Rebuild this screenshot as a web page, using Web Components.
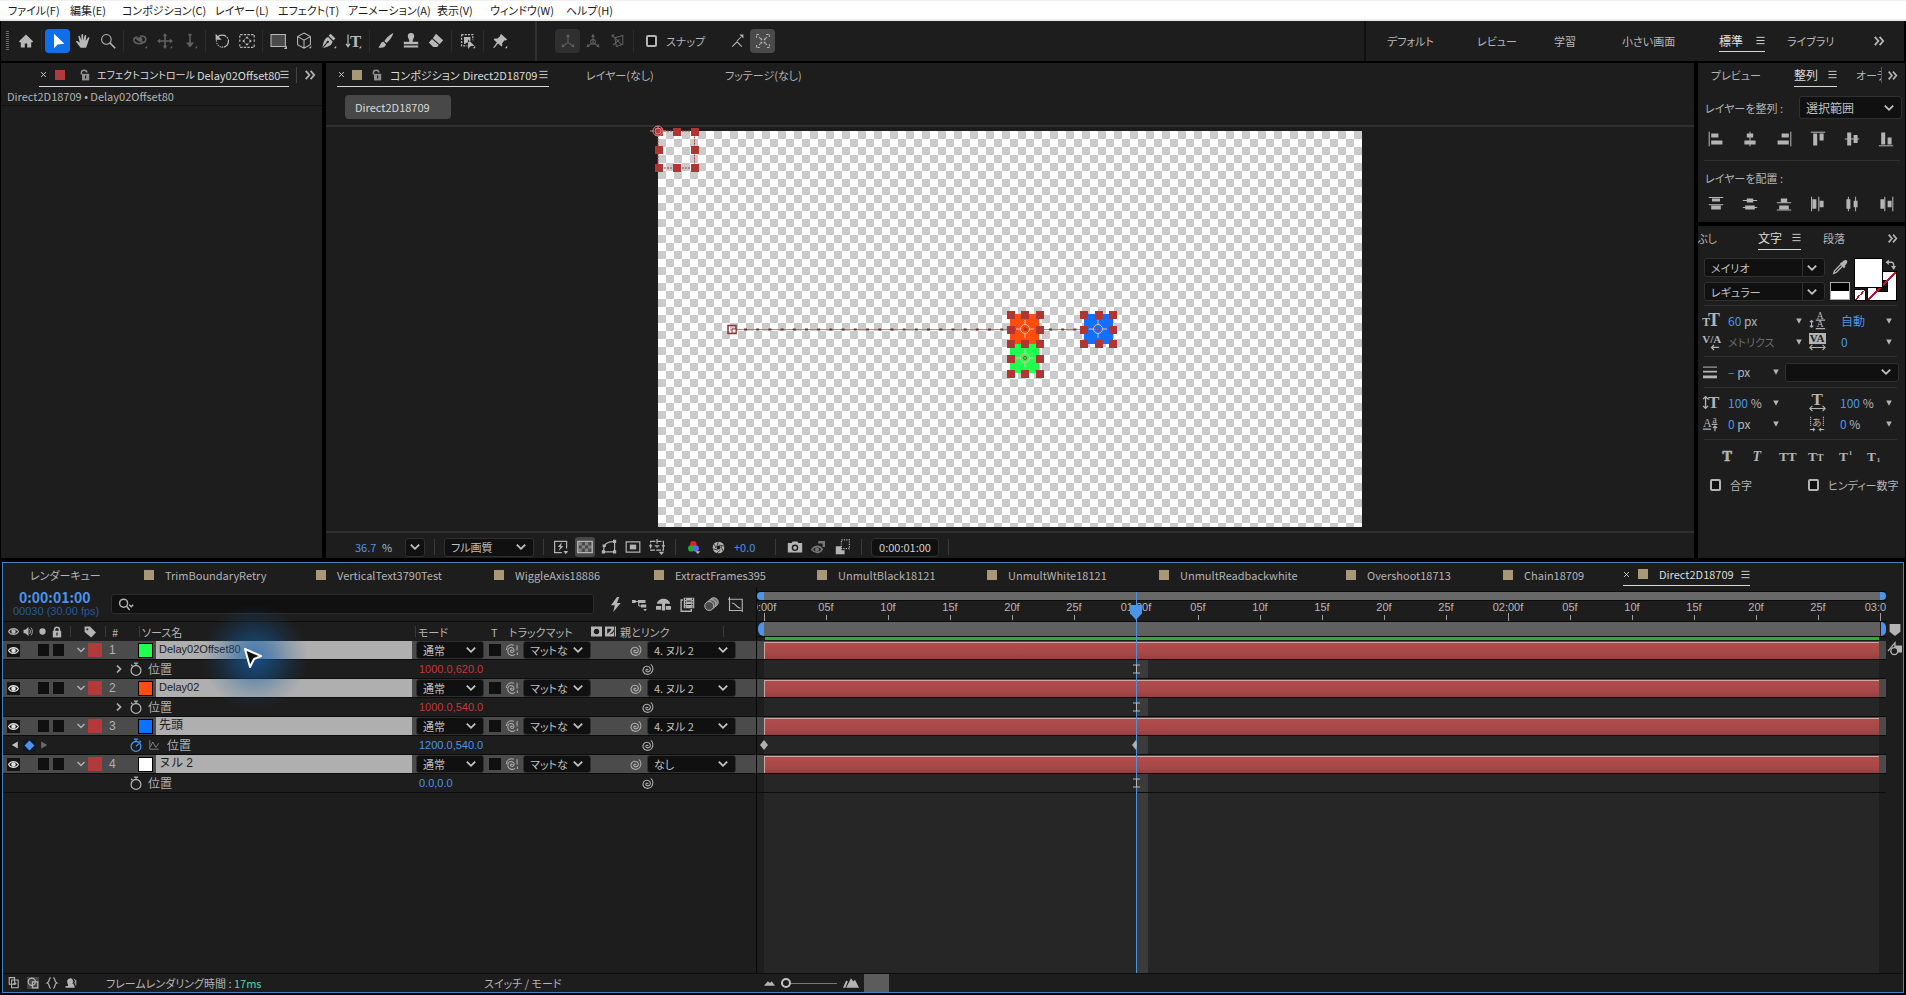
<!DOCTYPE html>
<html lang="ja">
<head>
<meta charset="utf-8">
<title>Direct2D18709</title>
<style>
html, body { margin: 0; background: #000; }
body { font: 12px/16px "Noto Sans CJK JP", "Noto Sans", sans-serif; color: #b4b4b4; font-feature-settings: "palt"; }
</style>
</head>
<body>
<ae-app></ae-app>
<script>
const BASE = `
*{box-sizing:border-box}
button,input,select,p,hr{margin:0;padding:0}
button{appearance:none;border:0;background:none;color:inherit;font:inherit;font-feature-settings:inherit;display:inline-flex;align-items:center;justify-content:center;white-space:nowrap}
input[type=checkbox]{appearance:none;width:11px;height:12px;border:2px solid #b4b4b4;border-radius:2px;background:#111;flex:none}
label{display:flex;align-items:center;white-space:nowrap}
select,input,textarea{font:inherit;color:inherit;font-feature-settings:inherit}
a{color:inherit;text-decoration:none}
.sw{width:10px;height:10px;background:#a99878;flex:none}
.blue{color:#4b94ea}
`;
function define(name, css, html) {
  customElements.define(name, class extends HTMLElement {
    connectedCallback() {
      if (this.shadowRoot) return;
      const root = this.attachShadow({ mode: 'open' });
      const t = document.createElement('template');
      t.innerHTML = `<style>:host{box-sizing:border-box}${BASE}${css}</style>` + (typeof html === 'function' ? html(this) : html);
      root.appendChild(t.content.cloneNode(true));
    }
  });
}

/* ---------- icons, on a 20 x 20 grid ---------- */
const corner = '<path d="M19 16v3h-3z" fill="currentColor" stroke="none"/>';
const F = 'fill="currentColor" stroke="none"';
const T = (x, y, s, c, extra = '') => `<text x="${x}" y="${y}" font-family="Liberation Serif, serif" font-size="${s}" ${F} ${extra}>${c}</text>`;
const ICONS = {
  home: `<path ${F} d="M10 2 1 10.500l1.500 1.500L3.500 11.200V18h5v-5h3v5h5v-6.800l1 .8L19 10.500z"/>`,
  arrow: `<path ${F} d="M5 1v18l4.500-4.500 8.500-1z"/>`,
  hand: `<path ${F} d="M7 18.500c-1.500-2-3.500-5-6-7.500 1-1.500 2.500-1 4 .7L6 12 4.200 4.800c-.2-1.500 1.600-1.700 2-.3L8 9.500 8 2.500c.1-1.500 2-1.500 2.100 0l.4 7L12 3.200c.4-1.300 2.100-1 2 .5L13.300 10l2.800-4c.8-1.200 2.300-.3 1.700 1-1.300 3-2 7.500-4 11.500z"/>`,
  zoom: `<circle cx="8" cy="8" r="6"/><path d="m12.500 12.500 6.500 6.500" stroke-width="2"/>`,
  orbit: `<path d="M7 5c-4 0-6 3-4 6s7 3 9 1M10 4c4-1 8 1 7 5-.5 2-2 3-4 3" stroke-width="2"/><path ${F} d="m12 9 3 3-4 3zM3 6h5v4z"/><circle cx="10" cy="8" r="3" ${F}/>${corner}`,
  pan: `<path d="M10 2v16M2 10h16" stroke-width="2"/><path ${F} d="m10 0 3 4H7zM10 20l3-4H7zM0 10l4-3v6zM20 10l-4-3v6z"/>`+corner,
  dolly: `<path d="M10 2v12" stroke-width="2"/><path ${F} d="M5 12h10l-5 6zM8 1h4v2H8z"/>`+corner,
  rotate: `<path d="M4 5c6-5 15-1 14 6-.5 5-5 7.500-9 6.500" stroke-dasharray="12 1 2 1.500" stroke-width="1.600"/><path d="M3 9c0 5 3 8 6 8.500" stroke-dasharray="1.500 1.500"/><path ${F} d="M2 1v7.500h7.500z"/>`,
  anchor: `<path d="M1 6V2h18v4M1 14v4h18v-4M1 8v4M19 8v4" stroke-dasharray="3 1.500" stroke-width="1.500"/><path ${F} d="m10 4 2.500 3h-5zM10 16l2.500-3h-5zM4 10l3-2.500v5zM16 10l-3-2.500v5z"/>`,
  rect: `<path d="M0 2h18v15H0z" fill="#4a4a4a"/><path d="M20 16v4h-4z" ${F}/>`,
  cube: `<path d="m10 0 8 4.500v10L10 19l-8-4.500v-10zM2 4.500l8 4.500 8-4.500M10 9v10"/>`+corner,
  pen: `<path ${F} d="m12 1 6 6-2.500 2.500-6-6zM9 5l5.500 5.500c-1 5-5 6-12 8.500L8 12.500a1.500 1.500 0 1 0-1-1L1.500 18C3.500 11 4.500 6 9 5z"/>`+corner,
  type: `<path d="M2.500 2v14M0 13.500 2.500 17 5 13.500" stroke-width="1.500"/>${T(5,17,21,'T','font-weight="bold"')}`+corner,
  brush: `<path ${F} d="M19 0c-3 1-9 6.500-11 10l2.500 2.500C14 10 18.500 4 19 0zM7 11c-4 0-3.500 4.500-6.500 7 4.500 1 9 0 9.500-4z"/>`,
  stamp: `<path ${F} d="M10 0a4 4 0 0 1 4 4c0 2.500-2 3.500-2 7h7v3H1v-3h7c0-3.500-2-4.500-2-7a4 4 0 0 1 4-4zM1 15.500h18V18H1z"/>`,
  eraser: `<path ${F} d="m10 1 9 8-4.500 5L6 6.500zM5 7.500l8.500 7.500-2 2.500H6.500L1 12z"/>`,
  roto: `<path d="M2 2h14v7M2 2v14h7" stroke-dasharray="2.500 1.500" stroke-width="1.600"/><path ${F} d="M5 5h8v5l-8 4zM10 8v12l3-3.500 5-.5z"/>`+corner,
  pin: `<path ${F} d="m11 1 8 7-2 1.500-1.300-.5-3.200 4c1 2 0 3.500-.5 4L7.500 13 2.500 19l-.9-.9L6 12 2 8c1-1.300 3-1.300 4.500-.7L10 4z"/>`+corner,
  axis1: `<path d="M10 4v8M10 12l-6 4M10 12l6 4"/><path ${F} d="m10 1 2.500 4h-5zM2 18l1-4.500L6 17zM18 18l-1-4.500-3 3.500z"/>`,
  axis2: `<path d="M10 4v8M10 12l-6 4M10 12l6 4"/><circle cx="10" cy="11" r="3"/><path ${F} d="m10 1 2.500 4h-5zM2 18l1-4.500L6 17zM18 18l-1-4.500-3 3.500z"/>`,
  axis3: `<path d="m6 6 10-3v11l-8 3zM3 3l12 12M4 15l8-7"/><path ${F} d="M2 2h4L2 6z"/>`,
  snapline: `<path d="m4 17 6-6 6 6M10 10l5-5"/><path ${F} d="M13 2h5v5z"/>`,
  snapbox: `<path d="M2 6V2h4M14 2h4v4M18 14v4h-4M6 18H2v-4M5 5l3 3M15 5l-3 3M5 15l3-3M15 15l-3-3" stroke-dasharray="3 1"/><path ${F} d="M7 7h2v2H7zM11 7h2v2h-2zM7 11h2v2H7zM11 11h2v2h-2z"/>`,
  menu: `<path d="M1 3h18M1 10h18M1 17h18" stroke-width="2"/>`,
  more: `<path d="m3 3 6 7-6 7M11 3l6 7-6 7" stroke-width="3"/>`,
  close: `<path d="m3 3 14 14M17 3 3 17" stroke-width="2.500"/>`,
  lock: `<path d="M4 9V6c0-5 9-5 9 0" stroke-width="2.500"/><path ${F} d="M5 8h12v11H5z"/><path stroke="#1d1d1d" stroke-width="2" d="M11 11v5"/>`,
  locked: `<path d="M6 9V6c0-5 8-5 8 0v3" stroke-width="2.500"/><path ${F} d="M3 8h14v11H3z"/><path stroke="#1d1d1d" stroke-width="2" d="M10 11v5"/>`,
  down: `<path d="m3 6 7 7 7-7" stroke-width="3"/>`,
  right: `<path d="m6 3 7 7-7 7" stroke-width="3.500"/>`,
  tri: `<path ${F} d="M3 4h14l-7 13z"/>`,
  triL: `<path ${F} d="M17 1v18L2 10z"/>`, triR: `<path ${F} d="M3 1v18l15-9z"/>`,
  dia: `<path ${F} d="m10 1 9 9-9 9-9-9z"/>`,
  eye: `<path stroke-width="2" d="M1 10c4-7 14-7 18 0-4 7-14 7-18 0z"/><circle cx="10" cy="10" r="4" ${F}/>`,
  speaker: `<path ${F} d="M1 7h3l6-5v16l-6-5H1z"/><path d="M12 6c2 2 2 6 0 8M14 3c4 3 4 11 0 14" stroke-width="1.800"/>`,
  dot: `<circle cx="10" cy="10" r="7" ${F}/>`,
  tag: `<path ${F} fill-rule="evenodd" d="M1 1h9l10 10-8 8L1 10zM4 4v3h3V4z"/>`,
  spiral: `<path stroke-width="1.600" d="M11 11c-1-3-4-1-3.500 1s5 2.500 6.500-.5-1-6.500-5-6.500-7 4-5.500 8.500 9 5.500 12.500 1.500 3-10-1-13"/>`,
  spiralM: `<path stroke-width="1.600" d="M10 10.500c-1-2-3.500-1-3 1s4 2 5-.5-1-5.500-4.500-5.500S2 9 3 13s7 6 11 3M12 2C7 0 1 2 .5 9M17 2v8M17.500 13v4"/>`,
  watch: `<circle cx="10" cy="12" r="7" stroke-width="1.800"/><path stroke-width="1.800" d="M7 1.500h6M10 2v3M3 4l2 2"/>`,
  watchOn: `<circle cx="10" cy="12" r="7" stroke-width="1.800"/><path stroke-width="1.800" d="M7 1.500h6M10 2v3M10 12l4-4M15 4l2 2"/>`,
  graph: `<path stroke-width="1.500" d="M3 2v15h15M4 13l4-8 5 9 5-7"/>`,
  bolt: `<path ${F} d="M12 0 4 11h5L7 20l10-12h-5l3-8z"/>`,
  flow: `<path stroke-width="1.500" d="M3 6h8M9 6v6M9 12h6"/><path ${F} d="M0 4h5v4H0zM8 4h10v4H8zM12 10h7v4h-7zM15 16h5l-2.500 3z"/>`,
  shy: `<path d="M1 9c2-9 16-9 18 0z" ${F}/><path ${F} d="M8 8h4v10H8zM0 12h7v5H0zM13 12h7v5h-7z"/>`,
  frames: `<path d="M4 4H1.500v15H15v-3" stroke-width="1.800"/><path ${F} d="M5 1h14v14H5z"/><path stroke="#1d1d1d" stroke-dasharray="2 1.500" d="M7.500 2v12M16.500 2v12"/><path stroke="#1d1d1d" d="M9 5.500h6M9 10h6"/>`,
  blur: `<circle cx="13" cy="7" r="6" fill="#777"/><circle cx="10" cy="9.500" r="6" fill="#666"/><circle cx="7" cy="12" r="6" fill="#4a4a4a"/>`,
  curve: `<path stroke-width="1.500" d="M2 3h17v15H2zM2 0v3M19 18v2M5 8c7 0 5 7 12 7M0 3h2"/>`,
  fast: `<path stroke-width="1.500" d="M17 12V3H2v14h9"/><path ${F} d="M11 4 6 10h3l-2 5 6-6h-3zM13 15h6l-3 4z"/>`,
  alpha: `<path stroke-width="1.800" d="M1 3h18v14H1z"/><path ${F} d="M2 4h4v4H2zM10 4h4v4h-4zM6 8h4v4H6zM14 8h4v4h-4zM2 12h4v4H2zM10 12h4v4h-4z" opacity=".55"/>`,
  mask: `<path stroke-width="1.500" d="M3 16 4 9c1-3 3-4 6-5l7-1v13z"/><path ${F} d="M1 14h4v4H1zM15 14h4v4h-4zM15 1h4v4h-4zM2 7h4v3H2z"/>`,
  region: `<path stroke-width="1.500" d="M1.500 3.500h17v13h-17z"/><path ${F} d="M6 7h8v6H6z"/>`,
  guides: `<path stroke-width="1.500" d="M2 3h16v11H2zM10 0v6M10 8v3M7 8.500h6M0 8.500h4M16 8.500h4" stroke-dasharray="6 1.500"/><path ${F} d="M12 16h7l-3.500 4z"/>`,
  rgb: `<circle cx="9" cy="6" r="4.500" fill="#e01f1f" stroke="none"/><circle cx="6" cy="12" r="4.500" fill="#1faf2f" stroke="none"/><circle cx="12.500" cy="12" r="4.500" fill="#5a6af0" stroke="none"/><path ${F} d="M12 16h7l-3.500 4z"/>`,
  aperture: `<circle cx="10" cy="10" r="6" stroke-width="6"/><path stroke="#1d1d1d" stroke-width="1.200" d="m10 1-3 8M19 8l-8-2M17 16l-3-8M7 19l6-5M1 12l8 2M3 4l3 7"/>`,
  camera: `<path ${F} d="M1 5h5l1-2h6l1 2h5v12H1z"/><circle cx="10" cy="11" r="3.200" stroke="#1d1d1d" stroke-width="1.800"/>`,
  eyecam: `<path stroke-width="2" d="M1 13c4-5 10-5 13 0-3 5-9 5-13 0z"/><circle cx="7.500" cy="13" r="2.500" ${F}/><path stroke-width="3" d="M9 4h7v6"/>`,
  proxy: `<path ${F} d="M1 9h7v5h4v5H1z"/><path stroke-dasharray="1.500 1.500" stroke-width="1.500" d="M8 1h10v11H8z"/>`,
  aL: `<path d="M1.500 1v18"/><path ${F} d="M4 3h9v5H4zM4 12h14v5H4z"/>`,
  aC: `<path d="M10 1v18"/><path ${F} d="M6 3h8v5H6zM3 12h14v5H3z"/>`,
  aR: `<path d="M18.500 1v18"/><path ${F} d="M7 3h9v5H7zM2 12h14v5H2z"/>`,
  aT: `<path d="M1 1.500h18"/><path ${F} d="M4 3h5v15H4zM12 3h5v9h-5z"/>`,
  aM: `<path d="M1 10h18"/><path ${F} d="M4 2h5v16H4zM12 5h5v10h-5z"/>`,
  aB: `<path d="M1 18.500h18"/><path ${F} d="M4 2h5v15H4zM12 8h5v9h-5z"/>`,
  dT: `<path d="M1 2h18M1 11h18"/><path ${F} d="M5 3h10v4H5zM4 12h12v5H4z"/>`,
  dM: `<path d="M1 5.500h18M1 14.500h18"/><path ${F} d="M6 3h8v5H6zM4 12h12v5H4z"/>`,
  dB: `<path d="M1 8.500h18M1 17.500h18"/><path ${F} d="M6 3h8v5H6zM4 12h12v5H4z"/>`,
  dL: `<path d="M2 1v18M11 1v18"/><path ${F} d="M3 4h5v12H3zM12 6h5v8h-5z"/>`,
  dC: `<path d="M5.500 1v18M14.500 1v18"/><path ${F} d="M3 4h5v12H3zM12 6h5v8h-5z"/>`,
  dR: `<path d="M8.500 1v18M18.500 1v18"/><path ${F} d="M3 4h5v12H3zM12 6h5v8h-5z"/>`,
  dropper: `<path ${F} d="M12 5c2-4 6-3 6-1s-2 4-3 5l1 1-2 2-5-5 2-2z"/><path stroke-width="1.600" d="m10 8-7 7-1 3 3-1 7-7"/>`,
  swap: `<path stroke-width="2.500" d="M6 5h6c3 0 4 2 4 8"/><path ${F} d="M7 0v10L1 5zM11 12h9l-4 7z"/>`,
  lines: `<path stroke-width="1.500" d="M0 3h20"/><path stroke-width="2.500" d="M0 9.500h20"/><path stroke-width="4" d="M0 17h20"/>`,
  size: T(-1,17,14,'T','font-weight="bold"') + T(6,17,21,'T','font-weight="bold"'),
  lead: `<path d="M3 10v8M1 12l2-2 2 2M1 16l2 2 2-2M8 9.500h11M8 19.500h11"/>${T(9,8,11,'A')}${T(9,18,11,'A')}`,
  kern: `${T(-1,12,13,'V/A','font-weight="bold"')}<path stroke-width="1.500" d="M10 17h9M13 14l-3 3 3 3"/>`,
  track: `<path ${F} d="M0 0h20v13H0z"/><text x="1" y="11" font-family="Liberation Serif, serif" font-weight="bold" font-size="13" fill="#1d1d1d" stroke="none">VA</text><path d="M1 17h18M4 14l-3 3 3 3M16 14l3 3-3 3"/>`,
  vscale: `<path stroke-width="1.500" d="M3 3v14M0 6l3-3 3 3M0 14l3 3 3-3"/>${T(6,17,20,'T','font-weight="bold"')}`,
  hscale: `${T(3,13,20,'T','font-weight="bold"')}<path d="M1 17h18M4 14l-3 3 3 3M16 14l3 3-3 3"/>`,
  base: `${T(0,14,15,'A')}${T(12,9,12,'a')}<path stroke-width="1.500" d="M0 16.500h10M11 10.500h7M15 19v-6M12.500 15l2.500-2.500 2.500 2.500"/>`,
  tsume: `<path stroke-dasharray="1.500 1" d="M2 1v12M18 1v12"/><text x="4" y="12" font-size="12" ${F}>あ</text><path d="M1 17h6M5 15l2 2-2 2M19 17h-6M15 15l-2 2 2 2"/>`,
  tB: T(2,17,20,'T','font-weight="bold" stroke-width="1" style="stroke:currentColor"'),
  tI: T(2,17,20,'T','font-weight="bold" font-style="italic"'),
  tTT: T(-3,17,19,'TT','font-weight="bold"'), tTt: T(-3,17,19,'T','font-weight="bold"') + T(10,17,14,'T','font-weight="bold"'),
  tSup: T(0,17,19,'T','font-weight="bold"') + T(14,8,10,'1','font-weight="bold"'), tSub: T(0,17,19,'T','font-weight="bold"') + T(14,19,10,'1','font-weight="bold"'),
  s1: `<path stroke-width="1.800" d="M2 1h9v11H2zM6 5h11v13H6zM9 11h5M11.500 8.500v5"/>`,
  s2: `<circle cx="8" cy="8" r="6" stroke-width="2"/><path stroke-width="2" d="M9 8h9v10H9z"/>`,
  s3: `<path stroke-width="2" d="M8 1C4 1 7 8 2 10c5 1 2 9 6 9M12 1c4 0 1 7 6 9-5 1-2 9-6 9"/>`,
  s4: `<path ${F} d="M4 9a5 5 0 1 1 8 2c3 1 4 3 4 7H1v-3h4v-3c-1-.5-1-1.500-1-3z"/><path d="M15 3c3 2 3 6 0 8M18 5v9" stroke-width="1.600"/>`,
  mask1: `<path ${F} fill-rule="evenodd" d="M0 1h20v18H0zM10 5a5 5 0 1 0 .01 0z"/>`,
  mask2: `<path ${F} d="M0 1h20v18H0z"/><path fill="#1d1d1d" stroke="none" d="M4 5h8c-2 4-4 6-8 9zM17 5c0 6-3 10-9 10l6-5z"/>`,
  hillS: `<path ${F} d="m0 14 7-8 4 3 3-3 6 8z"/>`,
  hillL: `<path ${F} d="m0 16 4-9 2 1-3 8zM4 16l6-12 3 4 2-2 5 10z"/>`,
  marker: `<path ${F} d="M1 0h18v13l-9 7-9-7z"/>`,
  motion: `<path ${F} d="M9 5h11v10h-7z"/><path stroke-width="1.800" d="M0 13 10 1v6"/><circle cx="9" cy="13" r="5" fill="#1d1d1d" stroke-width="2"/>`,
  find: `<circle cx="7" cy="9" r="5" stroke-width="1.800"/><path stroke-width="1.800" d="m10.500 12.500 4 5M14 11l2.500 2.500L19 11"/>`
};
define('ae-icon', `:host{display:inline-flex;flex:none;width:16px;height:16px}svg{width:100%;height:100%;display:block;overflow:visible}`,
  el => `<svg viewBox="0 0 20 20" fill="none" stroke="currentColor" stroke-width="1.300" aria-hidden="true">${ICONS[el.getAttribute('name')] || ''}</svg>`);
const ic = (n, s = 16, c = '') => `<ae-icon name="${n}" style="width:${s}px;height:${s}px${c ? ';color:' + c : ''}"></ae-icon>`;

/* ---------- drop-down ---------- */
define('ae-select', `
:host{display:block;position:relative;height:18px}
select{appearance:none;display:block;width:100%;height:100%;background:#101010;border:1px solid #303030;border-radius:3px;padding:0 20px 0 6px;line-height:16px;color:#c0c0c0;overflow:hidden;outline:0}
ae-icon{position:absolute;right:7px;top:calc(50% - 6px);pointer-events:none;color:#c4c4c4}
.split{position:absolute;right:22px;top:1px;bottom:1px;width:1px;background:#333}
:host([bare]) select{padding:0}:host([bare]) ae-icon{right:4px}
`, el => `<select aria-label="${el.getAttribute('label')}"><option>${el.getAttribute('value') || ''}</option></select>${el.hasAttribute('split') ? '<span class="split"></span>' : ''}${ic('down', 12)}`);

/* ---------- menu bar ---------- */
define('ae-menubar', `
:host{display:block;background:#fff;color:#1a1a1a;border-top:1px solid #f0f0f0;border-bottom:2px solid #ececec;height:21px;font-size:11px}
nav{display:grid;grid-template-columns:62px 52px 93px 63px 70px 89px 53px 76px auto;justify-content:start;padding-left:8px}
button{justify-content:flex-start;height:18px}
`, '<nav>' + ['ファイル(F)','編集(E)','コンポジション(C)','レイヤー(L)','エフェクト(T)','アニメーション(A)','表示(V)','ウィンドウ(W)','ヘルプ(H)'].map(t => `<button>${t}</button>`).join('') + '</nav>');

/* ---------- tool bar ---------- */
const tb = (n, cls = '') => `<button class="${cls}" aria-label="${n}">${ic(n)}</button>`;
define('ae-toolbar', `
:host{display:flex;height:40px;align-items:center;background:#1d1d1d;margin:0 2px 0 1px}
.grip{width:3px;height:20px;margin:0 4px 0 5px;background:repeating-linear-gradient(#666 0 1px,transparent 1px 2px)}
button{width:25px;height:24px;border-radius:4px;color:#b8b8b8}
button.on{background:#0e6fe8;color:#fff}button.lit{background:#4a4a4a;margin-left:1px}button.off{color:#606060}button.shade{background:#2f2f2f;color:#606060}
i{width:1px;height:22px;background:#2c2c2c;margin:0 3px}
i.tall{width:2px;height:40px;background:#303030;margin:0 18px 0 23px}
label{font-size:11px;gap:9px;margin:0 19px 0 9px}
.ws{display:grid;grid-template-columns:90px 77px 68px 97px 68px 86px auto;margin-left:auto;height:40px;align-items:center;border-left:2px solid #101010;padding:0 19px 0 21px;font-size:11px}
.ws button{width:auto;height:21px;justify-content:flex-start;border-radius:0}
.ws button.cur{width:46px;justify-content:space-between;border-bottom:1px solid #d8d8d8;color:#e4e4e4;font-size:12px}
`, `<span class="grip"></span>${tb('home')}<i></i>${tb('arrow','on')}${tb('hand')}${tb('zoom')}<i></i>${tb('orbit','off')}${tb('pan','off')}${tb('dolly','off')}<i></i>${tb('rotate')}${tb('anchor')}<i></i>${tb('rect')}${tb('cube')}${tb('pen')}${tb('type')}<i></i>${tb('brush')}${tb('stamp')}${tb('eraser')}<i></i>${tb('roto')}<i></i>${tb('pin')}<i class="tall"></i>${tb('axis1','shade')}${tb('axis2','off')}${tb('axis3','off')}<i></i><label><input type="checkbox">スナップ</label>${tb('snapline')}${tb('snapbox','lit')}
<div class="ws"><button>デフォルト</button><button>レビュー</button><button>学習</button><button>小さい画面</button><button class="cur">標準${ic('menu',9)}</button><button>ライブラリ</button><button aria-label="more">${ic('more',12)}</button></div>`);

/* ---------- panel tab ---------- */
const TABCSS = `
.tabs{display:flex;height:24px;align-items:stretch;font-size:11px;white-space:nowrap;overflow:hidden}
.tab{height:24px;display:flex;align-items:center;border-bottom:1px solid transparent}
.tab.cur{border-color:#d8d8d8;color:#dcdcdc}
`;

define('ae-effects', `${TABCSS}
:host{display:block;background:#1d1d1d}
.tabs{padding-left:38px}
.tab.cur{width:250px;justify-content:flex-start;padding:0 0 0 1px}.tab .sw{background:#b23a3a;margin:0 14px 0 8px}
.tab b{font-weight:400;margin-left:2px}.kana{font-size:10px;margin-left:6px}
.tab ae-icon:last-child{margin-left:auto}
.more{width:36px;margin-left:7px;border-left:1px solid #444;height:16px;align-self:center}
p{font-size:11px;height:19px;padding:1px 0 0 6px;border-bottom:1px solid #101010}
`, `<div class="tabs"><button class="tab cur">${ic('close',7)}<span class="sw"></span>${ic('lock',12,'#909090')}<span class="kana">エフェクトコントロール</span><b>Delay02Offset80</b>${ic('menu',9)}</button><button class="more" aria-label="more">${ic('more',12)}</button></div><p>Direct2D18709 • Delay02Offset80</p>`);

/* ---------- composition viewer ---------- */
const handles = (xs, ys) => ys.map((y, j) => xs.map((x, i) => (i === 1 && j === 1) ? '' : `<rect x="${x - 4}" y="${y - 4}" width="8" height="8"/>`).join('')).join('');
const target = (x, y) => `<g transform="translate(${x} ${y})" fill="none" stroke="#f0b8a8" stroke-width="1"><circle r="4.500"/><circle r="1.500" stroke="#b23a3a"/><path d="M0-9v4M0 9V5M-9 0h4M9 0H5"/></g>`;
define('ae-stage', `:host{display:block;min-height:0}svg{display:block;width:100%;height:100%;overflow:visible}`, `
<svg viewBox="0 0 704 396" role="img" aria-label="Direct2D18709">
<defs><pattern id="c" width="16" height="16" patternUnits="userSpaceOnUse"><path fill="#fff" d="M0 0h16v16H0z"/><path fill="#cbcbcb" d="M8 0h8v8H8zM0 8h8v8H0z"/></pattern></defs>
<rect width="704" height="396" fill="url(#c)"/>
<path fill="#ff4d0d" d="M352 183h29v30h-29z"/><path fill="#1fff4d" d="M352 213h29v29h-29z"/><path fill="#1070ff" d="M426 183h29v30h-29z"/>
<path d="M74 198.500H440" stroke="#b86060" stroke-opacity=".8"/>
<path d="M86 198.500H425" stroke="#7a2c2c" stroke-width="2" stroke-dasharray="3 9.200"/>
<path d="M70 194.500h8v8h-8z" fill="none" stroke="#8c3434" stroke-width="1.500"/><path d="M74 198h4v4h-4z" fill="#fff" stroke="#8c3434"/>
<path d="M0 0H36.500V37H0z" fill="none" stroke="#b23a3a" stroke-dasharray="2 1"/>
<g fill="#b03636">${handles([1,19,37],[1,19,37])}${handles([353,367,382],[184,199,213])}${handles([353,367,382],[213,228,243])}${handles([426,441,455],[184,199,213])}</g>
${target(367,198)}${target(367,227)}${target(440,198)}
<g fill="none" stroke="#e08080"><circle r="5"/><circle r="3" fill="#b23a3a"/><path d="M-8 0h4M0-5v3M8 0H5"/></g>
</svg>`);

define('ae-composition', `${TABCSS}
:host{display:grid;grid-template-rows:24px 38px 2px 1fr 2px 25px;background:#1d1d1d;min-width:0;min-height:0}
.tabs{padding-left:11px}
.tab.cur{width:212px;padding-left:1px;justify-content:flex-start}.tab .sw{margin:0 9px 0 7px}.kana{margin-left:7px}.tab b{font-weight:400;margin-left:3px}.tab.cur ae-icon:last-child{margin:0 1px 0 auto}
.tabs .l{width:139px;margin-left:37px;justify-content:flex-start}.tabs .f{justify-content:flex-start}
.crumb{width:106px;height:24px;background:#484848;border-radius:4px;color:#d8d8d8;font-size:11px;margin:8px 0 0 19px;justify-content:flex-start;padding-left:10px}
.line{background:#2f2f2f}
ae-stage{padding:4px 0}
footer{display:flex;align-items:center;padding-left:29px;padding-top:3px;font-size:11px}
footer button{width:24px;height:20px}footer button.on{width:20px;background:#484848;border-radius:3px;margin:0 2px}
i{width:1px;height:16px;background:#3a3a3a;margin:0 9px}
.tc{width:68px;height:19px;background:#101010;border:1px solid #303030;border-radius:4px;color:#d0d0d0;font-size:11px;text-align:center}
`, `<div class="tabs"><button class="tab cur">${ic('close',7)}<span class="sw"></span>${ic('lock',12,'#909090')}<span class="kana">コンポジション</span><b>Direct2D18709</b>${ic('menu',9)}</button><button class="tab l">レイヤー(なし)</button><button class="tab f">フッテージ(なし)</button></div>
<div><button class="crumb">Direct2D18709</button></div><div class="line"></div><ae-stage></ae-stage><div class="line"></div>
<footer><span class="blue" style="width:27px">36.7</span><span style="width:23px">%</span><ae-select label="倍率" bare style="width:20px;height:19px"></ae-select><i></i><ae-select label="画質" value="フル画質" style="width:90px;height:19px"></ae-select><i style="margin-right:5px"></i>
<button aria-label="fast">${ic('fast')}</button><button class="on" aria-label="alpha">${ic('alpha')}</button><button aria-label="mask">${ic('mask')}</button><button aria-label="region">${ic('region')}</button><button aria-label="guides">${ic('guides')}</button><i style="margin-left:6px;margin-right:6px"></i><button aria-label="channels">${ic('rgb',14)}</button><button aria-label="exposure">${ic('aperture',13)}</button><span class="blue" style="width:32px;padding-left:4px">+0.0</span><i style="margin:0 7px 0 13px"></i><button aria-label="snapshot">${ic('camera')}</button><button aria-label="show">${ic('eyecam',16,'#777')}</button><button aria-label="proxy">${ic('proxy')}</button><i style="margin-left:6px"></i><input class="tc" aria-label="時間" value="0:00:01:00"><i></i></footer>`);

/* ---------- align panel ---------- */
const row6 = a => `<div class="six">${a.map(n => `<button aria-label="${n}">${ic(n)}</button>`).join('')}</div>`;
define('ae-align', `${TABCSS}
:host{display:block;background:#1d1d1d;height:159px;padding-right:2px}
.tabs{display:grid;grid-template-columns:83px 62px 25px 1fr;padding-left:13px}
.tab{justify-content:flex-start;overflow:hidden}.tab.cur{width:43px;justify-content:space-between;font-size:12px}
.more{width:auto;height:16px;align-self:center;border-left:1px solid #555}
.lab{display:flex;align-items:center;justify-content:space-between;margin:9px 1px 0 7px;height:23px;font-size:11px}
.six{display:grid;grid-template-columns:repeat(6,34px);padding-left:1px;height:24px}
hr{border:0;height:1px;background:#303030;margin:9px 3px 0 6px}
.d{margin-top:5px}
`, `<div class="tabs"><button class="tab">プレビュー</button><button class="tab cur">整列${ic('menu',9)}</button><button class="tab">オーディオ</button><button class="more" aria-label="more">${ic('more',11)}</button></div>
<div class="lab"><span>レイヤーを整列 :</span><ae-select label="レイヤーを整列" value="選択範囲" style="width:103px;height:23px;font-size:12px"></ae-select></div>
<div style="height:8px"></div>${row6(['aL','aC','aR','aT','aM','aB'])}<hr><div class="lab d">レイヤーを配置 :</div><div style="height:3px"></div>${row6(['dT','dM','dB','dL','dC','dR'])}`);

/* ---------- character panel ---------- */
const dn = ic('tri', 8);
define('ae-character', `${TABCSS}
:host{display:block;background:#1d1d1d;padding-right:2px}
.tabs{display:grid;grid-template-columns:60px 65px 58px 1fr;height:24px}
.tab{justify-content:flex-start}.tab.cur{width:43px;justify-content:space-between;font-size:12px}
.first{overflow:hidden;justify-content:flex-end;width:19px}
.top{display:grid;grid-template-columns:121px 26px 1fr;height:50px;padding:8px 0 0 6px;align-items:start}
.top ae-select+ae-select{margin-top:5px}
.bw{width:20px;height:18px;border:1px solid #aaa;background:linear-gradient(#000 50%,#fff 50%);margin:6px 0 0 5px}
.sws{position:relative;height:44px}
.sws span{position:absolute;border:1px solid #000}
.st{left:16px;top:13px;width:30px;height:30px;background:#fff}
.in{left:25px;top:22px;width:12px;height:12px;background:#111}
.sl{left:17px;top:14px;width:28px;height:28px;background:linear-gradient(135deg,transparent 47%,#b01c2e 47% 53%,transparent 53%)}
.sws .sl{border:0}
.fi{left:3px;top:0;width:29px;height:30px;background:#fff}
.no{left:3px;top:31px;width:12px;height:12px;background:linear-gradient(135deg,#fff 45%,#b01c2e 45% 55%,#fff 55%)}
hr{border:0;height:1px;background:#303030;margin:0 6px}
.r{display:grid;grid-template-columns:25px 67px 14px 32px 44px 1fr;align-items:center;padding-left:5px;height:21px;font-size:12px}
.r.n{grid-template-columns:25px 44px 37px 31px 45px 1fr}
.r.s{grid-template-columns:25px 44px 13px 114px;height:30px}
.r>span{white-space:nowrap}
.dim{color:#6c6c6c;font-size:11px}
.six{display:grid;grid-template-columns:28px 31px 29px 30px 28px 28px;padding-left:16px;height:31px;align-items:center}
.ck{display:grid;grid-template-columns:98px 1fr;padding:5px 0 0 12px;font-size:11px}
.ck label{gap:9px;height:18px}
.g{height:4px}.g.w{height:5px}
`, `<div class="tabs"><button class="tab first">つぶし</button><button class="tab cur">文字${ic('menu',9)}</button><button class="tab">段落</button><button aria-label="more">${ic('more',11)}</button></div>
<div class="top"><div><ae-select split label="フォント" value="メイリオ" style="height:19px;font-size:11px"></ae-select><ae-select split label="スタイル" value="レギュラー" style="height:19px;font-size:11px"></ae-select></div><div><span style="display:block;padding-left:7px;height:18px">${ic('dropper',17)}</span><div class="bw"></div></div><div class="sws"><span class="st"></span><span class="in"></span><span class="sl"></span><span class="fi"></span><span class="no"></span><ae-icon name="swap" style="position:absolute;left:34px;top:1px;width:11px;height:12px"></ae-icon></div></div>
<div class="g w"></div><hr><div class="g"></div>
<div class="r">${ic('size',17)}<span><span class="blue">60</span> px</span>${dn}${ic('lead',17)}<span class="blue">自動</span>${dn}</div>
<div class="r">${ic('kern',17)}<span class="dim">メトリクス</span>${dn}${ic('track',17)}<span class="blue">0</span>${dn}</div>
<div class="g"></div><hr>
<div class="r s">${ic('lines',14)}<span><span class="blue">–</span> px</span>${dn}<ae-select label="線" style="height:19px"></ae-select></div>
<hr><div class="g"></div>
<div class="r n">${ic('vscale',17)}<span><span class="blue">100</span> %</span>${dn}${ic('hscale',17)}<span><span class="blue">100</span> %</span>${dn}</div>
<div class="r n">${ic('base',16)}<span><span class="blue">0</span> px</span>${dn}${ic('tsume',16)}<span><span class="blue">0</span> %</span>${dn}</div>
<div class="g w"></div><hr>
<div class="six">${['tB','tI','tTT','tTt','tSup','tSub'].map(n => `<button aria-label="${n}">${ic(n,14)}</button>`).join('')}</div>
<div class="ck"><label><input type="checkbox">合字</label><label><input type="checkbox">ヒンディー数字</label></div>`);

/* ---------- timeline ---------- */
const LAYERS = [
  { n: 1, name: 'Delay02Offset80', color: '#1fff4d', parent: '4. ヌル 2', val: '1000.0,620.0', red: 1 },
  { n: 2, name: 'Delay02', color: '#ff4d0d', parent: '4. ヌル 2', val: '1000.0,540.0', red: 1 },
  { n: 3, name: '先頭', color: '#1070ff', parent: '4. ヌル 2', val: '1200.0,540.0', keys: 1 },
  { n: 4, name: 'ヌル 2', color: '#fff', parent: 'なし', val: '0.0,0.0', plain: 1 }
];
define('ae-layer', `
:host{display:block;color:#b0b0b0}
.l,.p{height:19px;border-bottom:1px solid #0c0c0c;display:grid;align-items:center;font-size:11px}
.l{grid-template-columns:35px 15px 23px 12px 14px 36px 18px 260px 73px 12px 22px 100px 24px 1fr;background:#4b4b4b}
.e{width:13px;height:13px;background:#141414;margin-left:4px}
.b{width:11px;height:12px;background:#101010}
.lab{width:14px;height:14px;background:#b23a3a}
.num{padding-left:7px;font:12px/16px "Liberation Sans",sans-serif}
.c{width:15px;height:15px;border:1px solid #000}
.nm{width:256px;height:18px;background:#afafaf;color:#1c1c1c;font:11px/16px "Liberation Sans","Noto Sans CJK JP",sans-serif;padding-left:3px}
.nm.ja{font-size:12px}
.sp{justify-self:center;height:13px;display:flex}
.p{grid-template-columns:8px 12px 17px 70px 19px 18px 19px 253px 222px 1fr;font-size:12px}
.p>span{display:flex;align-items:center;white-space:nowrap}
.v{font:11px/16px "Liberation Sans",sans-serif;color:#4b94ea}.v.red{color:#c03838}
.p>.k{background:#0d1a2a;width:13px;height:13px;padding:1px;border-radius:2px}
`, el => { const d = LAYERS[el.dataset.i]; return `
<div class="l"><button class="e" aria-label="表示">${ic('eye',11,'#e0e0e0')}</button><span class="b"></span><span class="b"></span>${ic('down',10)}<span class="lab"></span><span class="num">${d.n}</span><span class="c" style="background:${d.color}"></span><span class="nm ${d.n > 2 ? 'ja' : ''}">${d.name}</span><ae-select label="モード" value="通常" style="width:68px"></ae-select><span class="b" style="width:12px"></span><span class="sp">${ic('spiralM',13)}</span><ae-select label="トラックマット" value="マットな" style="width:68px"></ae-select><span class="sp">${ic('spiral',13)}</span><ae-select label="親" value="${d.parent}" style="width:89px"></ae-select></div>
<div class="p"><span></span>${d.keys ? ic('triL',8,'#c0c0c0') + `<span class="k">${ic('dia',11,'#4b94ea')}</span><span>${ic('triR',8,'#6c6c6c')}</span>` : `<span></span><span></span><span></span>`}<span style="padding-left:4px">${d.keys || d.plain ? '' : ic('right',10)}</span>${d.keys ? ic('watchOn',14,'#4b94ea') : ic('watch',14)}<span style="gap:7px;padding-left:1px">${d.keys ? ic('graph',12,'#888') : ''}位置</span><span></span><span class="v ${d.red ? 'red' : ''}">${d.val}</span><span>${ic('spiral',13)}</span></div>`; });

define('ae-outline', `
:host{display:flex;flex-direction:column;min-width:0}
.top{display:grid;grid-template-columns:107px 483px 1fr;height:34px;padding-left:1px;align-items:center}
.tc{font-size:14px;font-weight:700;line-height:14px;padding-left:15px;color:#4b94ea}
.fps{font:11px/14px "Liberation Sans",sans-serif;color:#245a9c;padding-left:9px;white-space:nowrap}
.s{display:flex;align-items:center;height:20px;background:#101010;border:1px solid #2c2c2c;border-radius:3px;padding-left:6px}
.s input{background:none;border:0;outline:0;flex:1;min-width:0}
.acts{display:grid;grid-template-columns:repeat(6,24px);padding-left:9px}
.acts button{height:20px}
.h{display:grid;grid-template-columns:67px 35px 34px 276px 70px 13px 84px 32px 109px 1fr;height:20px;align-items:center;border-top:1px solid #0c0c0c;font-size:11px}
.h>span{border-left:1px solid #3a3a3a;height:11px;display:flex;align-items:center;white-space:nowrap}
.h>span.x{border-color:transparent}
`, `<div class="top"><div><div class="tc">0:00:01:00</div><div class="fps">00030 (30.00 fps)</div></div><div class="s">${ic('find',16)}<input type="text" aria-label="検索"></div>
<div class="acts">${['bolt','flow','shy','frames','blur','curve'].map(n => `<button aria-label="${n}">${ic(n,15)}</button>`).join('')}</div></div>
<div class="h"><span class="x" style="padding-left:4px;gap:4px">${ic('eye',11)}${ic('speaker',11)}${ic('dot',9)}${ic('locked',12)}</span><span style="padding-left:13px">${ic('tag',12)}</span><span style="padding-left:6px">#</span><span style="padding-left:2px">ソース名</span><span style="padding-left:2px">モード</span><span class="x" style="padding-left:5px">T</span><span class="x" style="padding-left:10px">トラックマット</span><span class="x" style="gap:3px;padding-left:8px">${ic('mask1',11)}${ic('mask2',11)}</span><span style="padding-left:5px">親とリンク</span><span></span></div>
${LAYERS.map((l, i) => `<ae-layer data-i="${i}"></ae-layer>`).join('')}`);

const marks = ['0:00f','05f','10f','15f','20f','25f','01:00f','05f','10f','15f','20f','25f','02:00f','05f','10f','15f','20f','25f','03:00f'];
define('ae-tracks', `
:host{display:flex;flex-direction:column;position:relative;min-width:0;overflow:hidden;border-left:1px solid #080808}
.nav,.work{display:grid;grid-template-columns:7px 1fr 6px}
.nav{height:10px;margin-top:4px;border-top:1px solid #0c0c0c;border-bottom:1px solid #0c0c0c}
.nav b{background:#686868}.nav u{background:#4b94ea}
.nav u:first-child,.work u:first-child{border-radius:7px 0 0 7px}.nav u:last-child,.work u:last-child{border-radius:0 7px 7px 0}
.ruler{height:20px;padding:0 6px 0 7px;overflow:hidden}
.marks{display:grid;grid-template-columns:repeat(19,1fr);width:calc(100% * 19 / 18);margin-left:calc(100% / -36);font:11px/12px "Liberation Sans",sans-serif;text-align:center;color:#b8b8b8}
.marks span{height:20px;white-space:nowrap;background:linear-gradient(#a0a0a0,#a0a0a0) no-repeat 50% 14px/1px 5px}
.marks span.big{background-position:50% 12px;background-size:1px 8px}
.work{height:16px;border-top:1px solid #0c0c0c;border-bottom:1px solid #0c0c0c}
.work b{background:#606060}.work u{background:#4b94ea;margin-left:1px}
.green{height:3px;margin:0 7px 0 8px;background:#2fae33}
.area{flex:1;margin:1px 0 0;position:relative;background:linear-gradient(90deg,#1d1d1d 7px,#262626 7px calc(100% - 7px),#1d1d1d calc(100% - 7px))}
.lay,.prop{height:19px;border-bottom:1px solid #0c0c0c}
.lay{background:#4b4b4b;padding:1px 7px 0}
.bar{height:17px;border-top:1px solid #cda6a2;border-left:1px solid #cda6a2;background:linear-gradient(#b04c4c,#a84848 60%,#944141)}
.over{position:absolute;inset:5px 6px 0 7px;pointer-events:none}
.in{inset:0 6px 0 7px}
.head{position:absolute;left:calc(100% / 3);top:0;bottom:0;width:1px;background:#4f92dc}
.head:after{content:"";position:absolute;left:-6px;top:13px;width:12px;height:15px;background:#4b94ea;clip-path:polygon(0 0,100% 0,100% 55%,50% 100%,0 55%)}
.fr{position:absolute;left:calc(100% / 3);top:0;bottom:0;width:12px;background:#3b3b3b}
.over svg{position:absolute;overflow:visible}
.tracks{position:relative}
.sel{position:absolute;z-index:1;width:12px;height:12px}
`, `<div class="nav"><u></u><b></b><u></u></div><div class="ruler"><div class="marks">${marks.map((m, i) => `<span class="${i % 6 ? '' : 'big'}">${m}</span>`).join('')}</div></div>
<div class="work"><u></u><b></b><u></u></div><div class="green"></div>
<div class="area"><div class="over in"><div class="fr"></div></div><div class="tracks">${LAYERS.map(() => '<div class="lay"><div class="bar"></div></div><div class="prop"></div>').join('')}</div>
<div class="over in">${[0,1,3].map(i => `<svg class="sel" style="left:calc(100% / 3 - 6px);top:${i * 38 + 22}px" viewBox="0 0 12 12"><path d="M3 2h7M6.500 2v8M3 10h7" fill="none" stroke="#b8b8b8"/></svg>`).join('')}
<svg class="sel" style="left:-6px;top:98px" viewBox="0 0 12 12"><path d="m6 1 4 5-4 5-4-5z" fill="#b0b0b0"/></svg><svg class="sel" style="left:calc(100% / 3 - 6px);top:98px" viewBox="0 0 12 12"><path d="m6 1 1 5-1 5-4-5z" fill="#b0b0b0"/></svg></div></div>
<div class="over"><div class="head"></div></div>`);

const TABS = [['TrimBoundaryRetry',172],['VerticalText3790Test',178],['WiggleAxis18886',160],['ExtractFrames395',163],['UnmultBlack18121',170],['UnmultWhite18121',172],['UnmultReadbackwhite',187],['Overshoot18713',157],['Chain18709',120]];
define('ae-timeline', `
:host{display:grid;grid-template-rows:24px 1fr 19px;background:#1d1d1d;border:1px solid #4583c4;margin:0 2px 2px;min-height:0;min-width:0}
.tabs{display:grid;grid-template-columns:114px ${TABS.map(t => t[1] + 'px').join(' ')} 127px;padding-left:27px;font-size:11px}
.tabs button{justify-content:flex-start;height:23px}.tabs .sw{margin-right:11px}
.tabs .cur{border-bottom:1px solid #d8d8d8;color:#dcdcdc}.tabs .cur .sw{margin-left:8px}.tabs .cur ae-icon:last-child{margin-left:auto}
.main{display:grid;grid-template-columns:753px 1fr 17px;min-height:0}
.side{display:flex;flex-direction:column;align-items:center;padding-top:37px;gap:6px}
.foot{display:grid;grid-template-columns:103px 378px 280px auto;align-items:center;font-size:11px;border-top:1px solid #0c0c0c}
.ics{display:flex;gap:7px;padding-left:5px}
.ics ae-icon:nth-child(2){background:#444}
.z{display:flex;align-items:center;height:18px}
.z input{appearance:none;background:none;width:56px;height:12px;margin:0 6px;outline:0}
.z input::-webkit-slider-runnable-track{height:1px;background:#777}
.z input::-webkit-slider-thumb{appearance:none;width:10px;height:10px;border:2px solid #c4c4c4;border-radius:50%;background:#1d1d1d;margin-top:-5px}
.z span{width:25px;height:18px;background:#5c5c5c;margin-left:5px}
.ms{color:#55d3a6}
`, `<div class="tabs"><button>レンダーキュー</button>${TABS.map(t => `<button><span class="sw"></span>${t[0]}</button>`).join('')}<button class="cur">${ic('close',7)}<span class="sw"></span>Direct2D18709${ic('menu',9)}</button></div>
<div class="main"><ae-outline></ae-outline><ae-tracks></ae-tracks><div class="side">${ic('marker',12)}${ic('motion',14)}</div></div>
<div class="foot"><div class="ics">${['s1','s2','s3','s4'].map(n => ic(n,12)).join('')}</div><div>フレームレンダリング時間 : <span class="ms">17ms</span></div><div>スイッチ / モード</div><div class="z">${ic('hillS',11)}<input type="range" aria-label="ズーム" value="0">${ic('hillL',16)}<span></span></div></div>`);

define('ae-pointer', `
:host{position:absolute;left:200px;top:602px;width:110px;height:110px;pointer-events:none;background:radial-gradient(circle,rgba(20,100,180,.7) 0,rgba(20,95,165,.5) 22%,rgba(20,90,155,.18) 48%,rgba(20,80,140,0) 68%)}
svg{position:absolute;left:43px;top:45px;width:22px;height:24px}
`, `<svg viewBox="0 0 22 24"><path d="M2 2l16 7-7 3-4 8z" fill="#111" stroke="#fff" stroke-width="2" stroke-linejoin="round"/></svg>`);

define('ae-app', `
:host{display:grid;grid-template-rows:21px 40px minmax(480px,501fr) minmax(400px,433fr);height:100vh;position:relative;overflow:hidden}
.work{display:grid;grid-template-columns:321px 1fr 206px;column-gap:4px;padding:2px 2px 4px 1px;min-height:0}
.right{display:grid;grid-template-rows:auto 1fr;row-gap:4px}
`, `<ae-menubar></ae-menubar><ae-toolbar></ae-toolbar><div class="work"><ae-effects></ae-effects><ae-composition></ae-composition><div class="right"><ae-align></ae-align><ae-character></ae-character></div></div><ae-timeline></ae-timeline><ae-pointer></ae-pointer>`);
</script>
</body>
</html>
